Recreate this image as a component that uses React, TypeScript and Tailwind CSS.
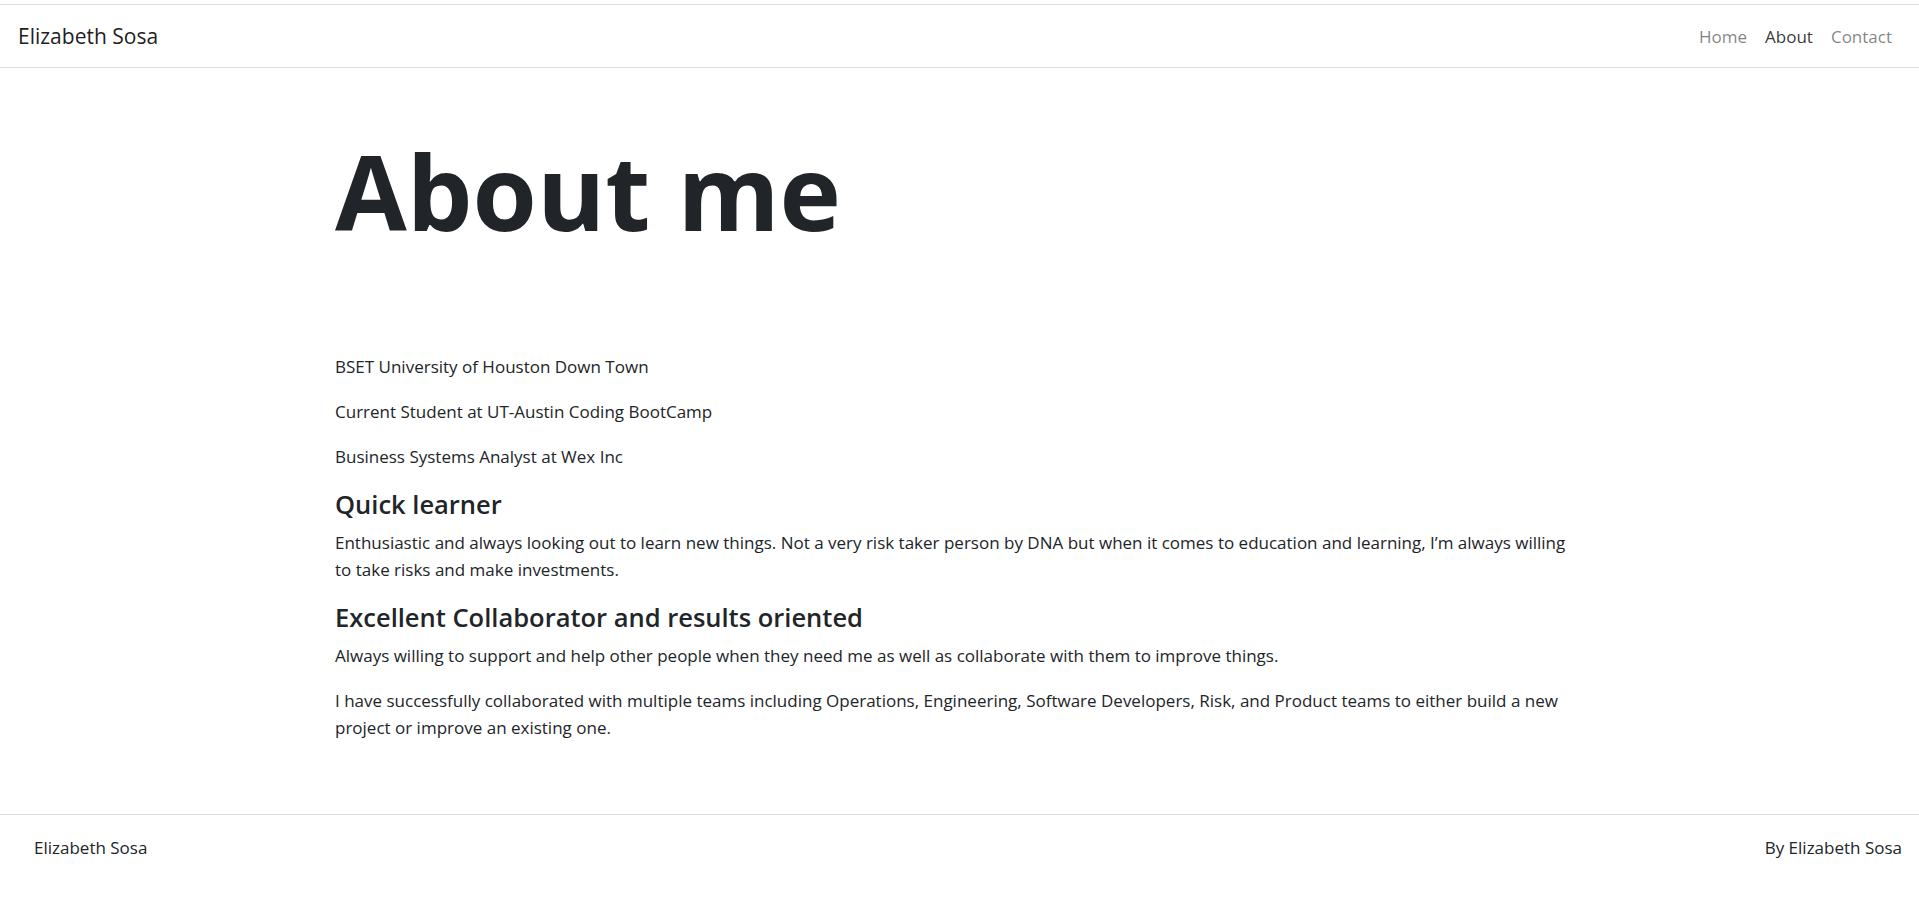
const navLinks = [
  { label: "Home", active: false },
  { label: "About", active: true },
  { label: "Contact", active: false },
];

const NavLink = ({ label, active }: { label: string; active: boolean }) => {
  return (
    <a
      href="#"
      className={
        active
          ? "px-[9px] text-[17px] leading-[27px] text-black/80"
          : "px-[9px] text-[17px] leading-[27px] text-black/50 hover:text-black/70"
      }
    >
      {label}
    </a>
  );
};

function SiteHeader() {
  return (
    <div className="pt-[4px]">
      <nav className="flex h-[64px] items-center justify-between border-y border-[#dedede] px-[18px]">
        <a href="#" className="text-[21px] leading-[30px] text-black/90">
          Elizabeth Sosa
        </a>
        <div className="flex items-center">
          {navLinks.map((l) => (
            <NavLink key={l.label} label={l.label} active={l.active} />
          ))}
        </div>
      </nav>
    </div>
  );
}

function SiteFooter() {
  return (
    <footer className="flex items-start justify-between border-t border-[#dedede] pl-[34px] pr-[17px] pt-[19px] pb-[48px] text-[17px] leading-[27px]">
      <span>Elizabeth Sosa</span>
      <span>By Elizabeth Sosa</span>
    </footer>
  );
}

export default function App() {
  return (
    <div
      className="flex min-h-screen flex-col bg-white text-[#212529]"
      style={{ fontFamily: '"Segoe UI", "Open Sans", "Noto Sans", Arial, sans-serif' }}
    >
      <SiteHeader />
      <main className="mx-auto w-[1249px] flex-1 pb-[45px]">
        <h1 className="mt-[60px] mb-[100px] text-[104px] font-bold leading-[125px]">About me</h1>
        <div className="text-[17px] leading-[27px]">
          <p className="mb-[18px]">BSET University of Houston Down Town</p>
          <p className="mb-[18px]">Current Student at UT-Austin Coding BootCamp</p>
          <p className="mb-[18px]">Business Systems Analyst at Wex Inc</p>

          <h4 className="mb-[9px] text-[25.5px] font-semibold leading-[32px]">Quick learner</h4>
          <p className="mb-[18px]">
            Enthusiastic and always looking out to learn new things. Not a very risk taker person by DNA but when it
            comes to education and learning, I’m always willing to take risks and make investments.
          </p>

          <h4 className="mb-[9px] text-[25.5px] font-semibold leading-[32px]">
            Excellent Collaborator and results oriented
          </h4>
          <p className="mb-[18px]">
            Always willing to support and help other people when they need me as well as collaborate with them to
            improve things.
          </p>
          <p className="mb-[18px]">
            I have successfully collaborated with multiple teams including Operations, Engineering, Software
            Developers, Risk, and Product teams to either build a new project or improve an existing one.
          </p>
        </div>
      </main>
      <SiteFooter />
    </div>
  );
}
